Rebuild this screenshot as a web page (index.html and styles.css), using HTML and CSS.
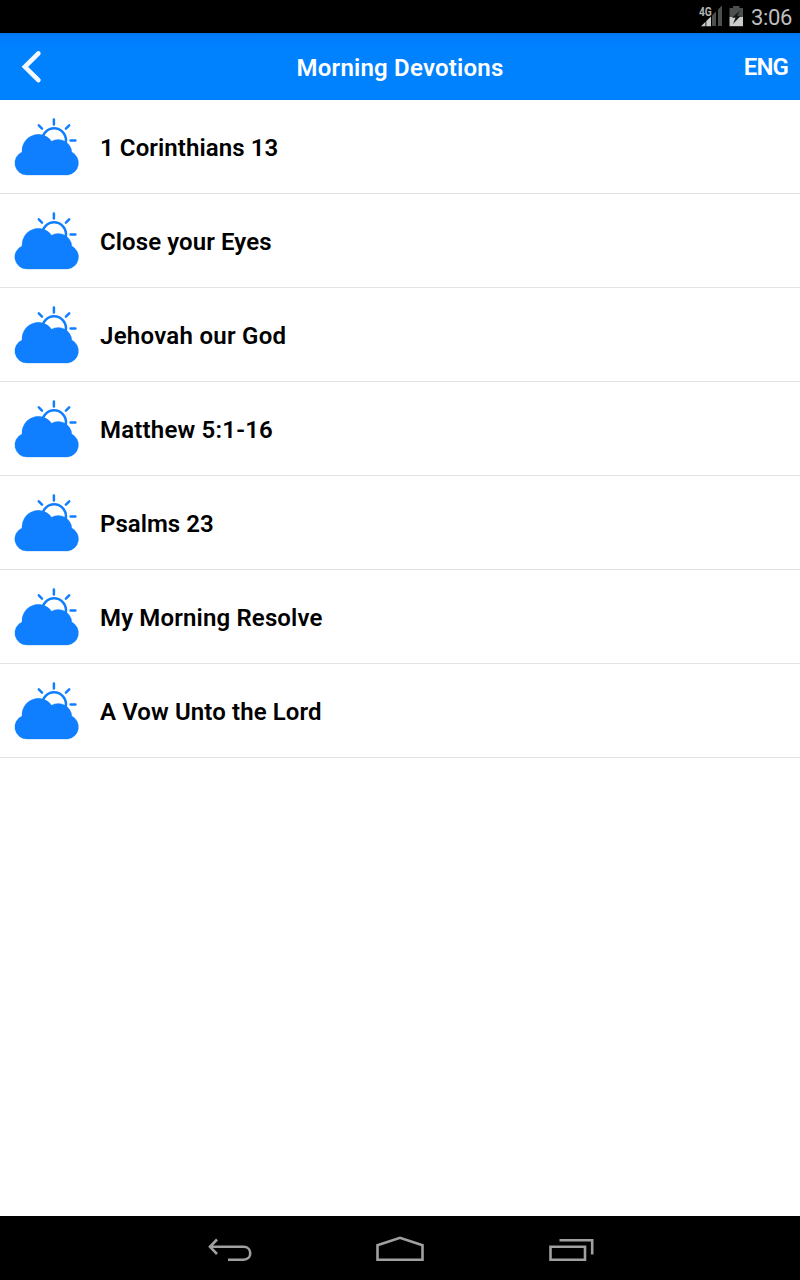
FILE: index.html
```html
<!DOCTYPE html>
<html lang="en">
<head>
<meta charset="utf-8">
<title>Morning Devotions</title>
<link rel="stylesheet" href="styles.css">
</head>
<body>
<svg class="defs" width="0" height="0">
  <symbol id="weather" viewBox="0 0 100 93">
    <circle cx="54.1" cy="40.2" r="11.9" fill="none" stroke="#0f7fff" stroke-width="2.5"/>
    <path d="M53.9 19.4V24.4M38.8 25.4L42 28.6M69.2 25.3L65.9 28.6M70.6 40.6H75.4" fill="none" stroke="#0f7fff" stroke-width="2.5" stroke-linecap="round"/>
    <path d="M27 75A12 12 0 0 1 22 52A16.3 16.3 0 0 1 51.5 41.2A13.6 13.6 0 0 1 71.8 52A12.2 12.2 0 0 1 67.8 75Z" fill="#0f7fff" stroke="#0f7fff" stroke-width=".3"/>
  </symbol>
</svg>
<div class="screen">
  <div class="status">
    <svg class="status-icons" width="54" height="33" viewBox="0 0 54 33">
      <path d="M12 26V15.5L16 11.5V26ZM18 26V9.5L22 5.5V26Z" fill="#4b504f"/>
      <path d="M1 26.2L5.5 21.7V26.2ZM6.3 26.2V21L11 16.5V26.2Z" fill="#c8cccb"/>
      <path d="M29.5 8H33V6H39.5V8H43V17H29.5Z" fill="#4b504f"/>
      <path d="M29.5 17H43V26.2H29.5Z" fill="#c8cccb"/>
      <path d="M40 10.5L32 17.7H35.5L33 24L40.8 15.8H37Z" fill="#151515"/>
    </svg>
    <span class="network">4G</span>
    <span class="clock">3:06</span>
  </div>
  <header class="bar">
    <svg class="back" width="60" height="67" viewBox="0 0 60 67"><path d="M38.4 20.4L24.9 33.8L38.4 47.2" fill="none" stroke="#f5f9ff" stroke-width="4.6" stroke-linecap="round"/></svg>
    <h1 class="title">Morning Devotions</h1>
    <span class="lang">ENG</span>
  </header>
  <ul class="list">
    <li class="row"><svg class="icon"><use href="#weather"/></svg><span class="r1">1 Corinthians 13</span></li>
    <li class="row"><svg class="icon"><use href="#weather"/></svg><span class="r2">Close your Eyes</span></li>
    <li class="row"><svg class="icon"><use href="#weather"/></svg><span class="r3">Jehovah our God</span></li>
    <li class="row"><svg class="icon"><use href="#weather"/></svg><span class="r4">Matthew 5:1-16</span></li>
    <li class="row"><svg class="icon"><use href="#weather"/></svg><span class="r5">Psalms 23</span></li>
    <li class="row"><svg class="icon"><use href="#weather"/></svg><span class="r6">My Morning Resolve</span></li>
    <li class="row"><svg class="icon"><use href="#weather"/></svg><span class="r7">A Vow Unto the Lord</span></li>
  </ul>
  <nav class="nav">
    <svg width="800" height="64" viewBox="0 0 800 64" fill="none" stroke="#a0a0a0" stroke-width="2.6">
      <path d="M217 23.5L210 30.8L217 38M210.5 30.8H243.5C252.5 30.8 252.5 43.7 243.5 43.7H228"/>
      <path d="M377.5 43.7V29.2L400 21.8L422.5 29.2V43.7Z"/>
      <path d="M550.5 30.7H585V43.7H550.5ZM559.5 24.2H592.2V38.5"/>
    </svg>
  </nav>
</div>
</body>
</html>
```
FILE: styles.css
```css
body { margin: 0; background: #fff; font-family: Roboto, "Liberation Sans", sans-serif; }
.defs { display: block; }
.screen { display: flex; flex-direction: column; width: 800px; height: 1280px; }
.status { position: relative; display: flex; justify-content: flex-end; height: 33px; padding-right: 8px; background: #000; color: #bebebe; }
.status-icons { margin-right: -3px; }
.network { position: absolute; left: 699px; top: 5px; font-size: 12.5px; line-height: 13px; font-weight: 700; letter-spacing: -0.3px; color: #b0b4b3; transform: scaleX(.82); transform-origin: left; }
.clock { width: 41px; font-size: 22px; line-height: 35px; letter-spacing: -0.35px; white-space: nowrap; }
.bar { display: grid; grid-template-columns: 100px 1fr 100px; height: 67px; background: linear-gradient(#0074e8, #007cf8 3px, #007fff 12px, #0082ff 16px); color: #fff; }
.title { margin: 0; font-size: 24px; line-height: 71px; font-weight: 600; letter-spacing: 0.21px; text-align: center; white-space: nowrap; }
.lang { padding-right: 12px; font-size: 24px; line-height: 69px; font-weight: 600; letter-spacing: -0.9px; text-align: right; }
.list { flex: 1; margin: 0; padding: 0; list-style: none; }
.row { display: flex; height: 93px; border-bottom: 1px solid #e3e3e3; color: #000; font-size: 24px; line-height: 97px; font-weight: 600; }
.icon { width: 100px; height: 93px; }
.r1, .r2 { letter-spacing: 0.09px; }
.r3 { letter-spacing: 0.28px; }
.r4 { letter-spacing: 0.2px; }
.r5 { letter-spacing: 0.02px; }
.r6 { letter-spacing: 0.15px; }
.r7 { letter-spacing: 0.11px; }
.nav { height: 64px; background: #000; }
```
